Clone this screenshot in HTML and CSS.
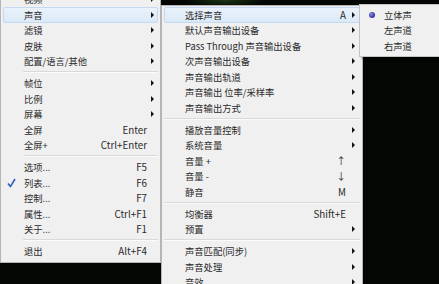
FILE: index.html
```html
<!DOCTYPE html>
<html lang="zh-CN">
<head>
<meta charset="utf-8">
<title>菜单</title>
<link rel="stylesheet" href="styles.css">
</head>
<body>
<div class="screen">
  <div class="menu m1">
    <div class="row"><span class="ico"></span><span class="lbl">视频</span><span class="key"></span><span class="arr"><i class="tri"></i></span></div>
    <div class="row hot"><span class="ico"></span><span class="lbl">声音</span><span class="key"></span><span class="arr"><i class="tri"></i></span></div>
    <div class="row"><span class="ico"></span><span class="lbl">滤镜</span><span class="key"></span><span class="arr"><i class="tri"></i></span></div>
    <div class="row"><span class="ico"></span><span class="lbl">皮肤</span><span class="key"></span><span class="arr"><i class="tri"></i></span></div>
    <div class="row"><span class="ico"></span><span class="lbl">配置/语言/其他</span><span class="key"></span><span class="arr"><i class="tri"></i></span></div>
    <div class="sep"></div>
    <div class="row"><span class="ico"></span><span class="lbl">帧位</span><span class="key"></span><span class="arr"><i class="tri"></i></span></div>
    <div class="row"><span class="ico"></span><span class="lbl">比例</span><span class="key"></span><span class="arr"><i class="tri"></i></span></div>
    <div class="row"><span class="ico"></span><span class="lbl">屏幕</span><span class="key"></span><span class="arr"><i class="tri"></i></span></div>
    <div class="row"><span class="ico"></span><span class="lbl">全屏</span><span class="key">Enter</span><span class="arr"></span></div>
    <div class="row"><span class="ico"></span><span class="lbl">全屏+</span><span class="key">Ctrl+Enter</span><span class="arr"></span></div>
    <div class="sep"></div>
    <div class="row"><span class="ico"></span><span class="lbl">选项...</span><span class="key">F5</span><span class="arr"></span></div>
    <div class="row"><span class="ico"><svg class="check" width="9" height="10" viewBox="0 0 9 10"><path d="M1 5.5 L3.4 8.6 L8 1" fill="none" stroke="#2f5fb8" stroke-width="1.6" stroke-linejoin="round"/></svg></span><span class="lbl">列表...</span><span class="key">F6</span><span class="arr"></span></div>
    <div class="row"><span class="ico"></span><span class="lbl">控制...</span><span class="key">F7</span><span class="arr"></span></div>
    <div class="row"><span class="ico"></span><span class="lbl">属性...</span><span class="key">Ctrl+F1</span><span class="arr"></span></div>
    <div class="row"><span class="ico"></span><span class="lbl">关于...</span><span class="key">F1</span><span class="arr"></span></div>
    <div class="sep"></div>
    <div class="row"><span class="ico"></span><span class="lbl">退出</span><span class="key">Alt+F4</span><span class="arr"></span></div>
  </div>

  <div class="menu m2">
    <div class="row hot"><span class="ico"></span><span class="lbl">选择声音</span><span class="key">A</span><span class="arr"><i class="tri"></i></span></div>
    <div class="row"><span class="ico"></span><span class="lbl">默认声音输出设备</span><span class="key"></span><span class="arr"><i class="tri"></i></span></div>
    <div class="row"><span class="ico"></span><span class="lbl">Pass Through 声音输出设备</span><span class="key"></span><span class="arr"><i class="tri"></i></span></div>
    <div class="row"><span class="ico"></span><span class="lbl">次声音输出设备</span><span class="key"></span><span class="arr"><i class="tri"></i></span></div>
    <div class="row"><span class="ico"></span><span class="lbl">声音输出轨道</span><span class="key"></span><span class="arr"><i class="tri"></i></span></div>
    <div class="row"><span class="ico"></span><span class="lbl">声音输出 位率/采样率</span><span class="key"></span><span class="arr"><i class="tri"></i></span></div>
    <div class="row"><span class="ico"></span><span class="lbl">声音输出方式</span><span class="key"></span><span class="arr"><i class="tri"></i></span></div>
    <div class="sep"></div>
    <div class="row"><span class="ico"></span><span class="lbl">播放音量控制</span><span class="key"></span><span class="arr"><i class="tri"></i></span></div>
    <div class="row"><span class="ico"></span><span class="lbl">系统音量</span><span class="key"></span><span class="arr"><i class="tri"></i></span></div>
    <div class="row"><span class="ico"></span><span class="lbl">音量 +</span><span class="key">↑</span><span class="arr"></span></div>
    <div class="row"><span class="ico"></span><span class="lbl">音量 -</span><span class="key">↓</span><span class="arr"></span></div>
    <div class="row"><span class="ico"></span><span class="lbl">静音</span><span class="key">M</span><span class="arr"></span></div>
    <div class="sep"></div>
    <div class="row"><span class="ico"></span><span class="lbl">均衡器</span><span class="key">Shift+E</span><span class="arr"></span></div>
    <div class="row"><span class="ico"></span><span class="lbl">预置</span><span class="key"></span><span class="arr"><i class="tri"></i></span></div>
    <div class="sep"></div>
    <div class="row"><span class="ico"></span><span class="lbl">声音匹配(同步)</span><span class="key"></span><span class="arr"><i class="tri"></i></span></div>
    <div class="row"><span class="ico"></span><span class="lbl">声音处理</span><span class="key"></span><span class="arr"><i class="tri"></i></span></div>
    <div class="row"><span class="ico"></span><span class="lbl">音效</span><span class="key"></span><span class="arr"><i class="tri"></i></span></div>
  </div>

  <div class="menu m3">
    <div class="row"><span class="ico"><i class="dot"></i></span><span class="lbl">立体声</span></div>
    <div class="row"><span class="ico"></span><span class="lbl">左声道</span></div>
    <div class="row"><span class="ico"></span><span class="lbl">右声道</span></div>
  </div>
</div>
</body>
</html>
```

FILE: styles.css
```css
html, body {
  margin: 0;
  padding: 0;
  width: 439px;
  height: 284px;
  overflow: hidden;
  background: #020402;
}

.screen {
  display: flex;
  align-items: flex-start;
  width: 439px;
  height: 284px;
  overflow: hidden;
  background:
    radial-gradient(ellipse 40px 8px at 225px 0px, rgba(60, 110, 40, 0.45), rgba(0, 0, 0, 0) 100%),
    #030603;
  font-family: "Noto Sans CJK SC", "Noto Sans", sans-serif;
  font-size: 9.3px;
  color: #2a2a2a;
}

.menu {
  flex: none;
  box-sizing: border-box;
  background: #f0f0f0;
  border: 1px solid #b5b5b5;
}

.m1 {
  width: 161px;
  margin-top: -11.3px;
  padding: 2px 0 3px;
}

.m2 {
  width: 202px;
  margin-top: 5.2px;
  padding: 1px 0 2px;
}

.m3 {
  position: relative;
  z-index: 2;
  width: 110px;
  margin-left: -4px;
  margin-top: 4px;
  padding: 2px 0 2px;
  border-color: #c4c4c4;
  box-shadow: 2px 2px 2px rgba(0, 0, 0, 0.25);
}

.row {
  display: flex;
  align-items: center;
  box-sizing: border-box;
  height: 15.5px;
  margin: 0 2px;
  white-space: nowrap;
  border: 1px solid transparent;
  border-radius: 2px;
}

.row.hot {
  background: linear-gradient(#eaf2fb, #dbe9f7);
  border-color: #c3d9f1;
}

.ico {
  flex: none;
  width: 20px;
  height: 100%;
  display: flex;
  align-items: center;
  justify-content: center;
}

.lbl {
  flex: 1;
  line-height: 12px;
}

.key {
  flex: none;
  text-align: right;
  line-height: 12px;
  font-size: 9.8px;
}

.arr {
  flex: none;
  width: 10px;
  height: 100%;
  display: flex;
  align-items: center;
  justify-content: flex-end;
  padding-right: 3px;
  box-sizing: border-box;
}

.m2 .arr {
  width: 13px;
  padding-right: 4px;
}

.tri {
  width: 0;
  height: 0;
  border-top: 3px solid transparent;
  border-bottom: 3px solid transparent;
  border-left: 3px solid #111;
}

.sep {
  height: 6.5px;
  display: flex;
  flex-direction: column;
  justify-content: center;
}

.sep::before {
  content: "";
  display: block;
  height: 1px;
  background: #d9d9d9;
  border-bottom: 1px solid #fbfbfb;
}

.m1 .sep {
  margin: 0 2px 0 22px;
}

.m2 .sep {
  margin: 0 2px 0 2px;
}

.check {
  display: block;
  margin-left: -6px;
}

.m3 .ico {
  width: 21px;
}

.dot {
  display: block;
  width: 6px;
  height: 6px;
  border-radius: 50%;
  margin-left: -3px;
  background: radial-gradient(circle at 35% 35%, #8c8ce8, #2c2c9a 70%);
}
```
